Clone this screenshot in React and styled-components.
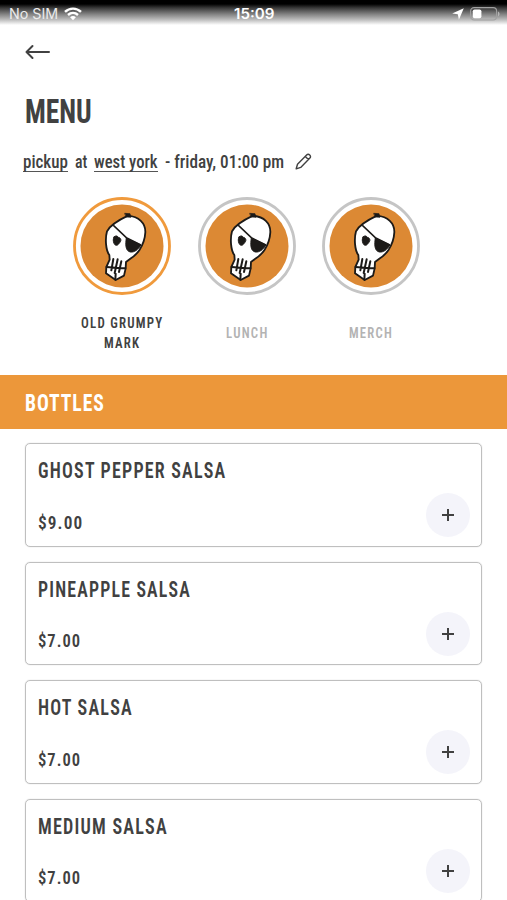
import React, { useLayoutEffect, useRef, useState } from "react";
import styled, { createGlobalStyle } from "styled-components";

const Global = createGlobalStyle`
  *, *::before, *::after { box-sizing: border-box; }
  html, body { margin: 0; background: #fff; }
  body { height: 900px; overflow: hidden; }
`;

const Screen = styled.div`
  width: 507px;
  height: 900px;
  overflow: hidden;
  display: flex;
  flex-direction: column;
  background: #fff;
  color: #414141;
  font-family: Roboto, "Liberation Sans", sans-serif;
  font-stretch: 75%;
`;

/* Condensed text squeezed to a fixed run width. */
const FitBox = styled.span`
  display: inline-block;
  flex: none;
  width: ${(p) => p.$width}px;
  white-space: nowrap;
`;

const FitInner = styled.span`
  display: inline-block;
  transform-origin: 0 50%;
`;

function Fit({ width, children }) {
  const ref = useRef(null);
  const [scale, setScale] = useState(1);
  useLayoutEffect(() => {
    const node = ref.current;
    const spacing = parseFloat(getComputedStyle(node).letterSpacing) || 0;
    setScale(width / (node.offsetWidth - spacing));
  }, [width, children]);
  return (
    <FitBox $width={width}>
      <FitInner ref={ref} style={{ transform: `scaleX(${scale})` }}>
        {children}
      </FitInner>
    </FitBox>
  );
}

const StatusBar = styled.header`
  flex: none;
  height: 25px;
  padding: 3px 7px 0 9px;
  display: grid;
  grid-template-columns: 225px 1fr auto;
  align-items: start;
  color: #fff;
  background: linear-gradient(#000 0, #000 4px, #3a3a3a 8px, #808080 14px, #c0c0c0 20px, #fff 25px);
  font: 400 14px/22px Inter, "Liberation Sans", sans-serif;
  font-stretch: 100%;
`;

const StatusSide = styled.div`
  display: flex;
  align-items: center;
  height: 22px;
  gap: 6px;
  color: ${(p) => (p.$end ? "#fff" : "#ececec")};
  justify-content: ${(p) => (p.$end ? "flex-end" : "flex-start")};
`;

const Clock = styled.div`
  font-weight: 600;
`;

const BackButton = styled.button`
  flex: none;
  width: 26px;
  height: 16px;
  margin: 19px 0 0 25px;
  padding: 0;
  border: 0;
  background: none;
  color: #414141;
  svg { display: block; }
`;

const Title = styled.h1`
  flex: none;
  margin: 31px 0 0 25px;
  font-size: 34px;
  line-height: 40px;
  font-weight: 700;
`;

const PickupLine = styled.div`
  flex: none;
  display: flex;
  align-items: center;
  height: 24px;
  margin: 18px 0 0 23px;
  font-size: 18.5px;
  line-height: 24px;
  font-weight: 500;
  svg { margin-left: 11px; }
`;

const Word = styled.span`
  height: 22px;
  margin-right: ${(p) => p.$gap || 0}px;
  line-height: 24px;
  border-bottom: ${(p) => (p.$link ? "1px solid #555" : "0")};
`;

const Categories = styled.nav`
  flex: none;
  display: flex;
  gap: 26.7px;
  margin: 24px 0 0 73px;
  height: 178px;
`;

const Category = styled.div`
  width: 98px;
  display: flex;
  flex-direction: column;
  align-items: center;
  color: ${(p) => (p.$active ? "#414141" : "#b3b3b3")};
`;

const CategoryLabel = styled.div`
  height: 40px;
  margin: 19px 1px 0 0;
  display: flex;
  flex-direction: column;
  align-items: center;
  justify-content: center;
  font-size: 15.5px;
  line-height: 19.7px;
  font-weight: 600;
  letter-spacing: 1.5px;
`;

const SectionBand = styled.h2`
  flex: none;
  margin: 0;
  height: 53.5px;
  padding-left: 25px;
  background: #ec973a;
  color: #fff;
  font-size: 24px;
  line-height: 56px;
  font-weight: 700;
  letter-spacing: 1.2px;
`;

const List = styled.main`
  display: flex;
  flex-direction: column;
  gap: 15px;
  padding: 14.6px 25px 0 25.4px;
`;

const Card = styled.article`
  flex: none;
  height: 103.5px;
  padding: 12.4px 11px 0 11.2px;
  border: 1px solid #bfbfbf;
  border-radius: 5px;
  box-shadow: 0 0 1px #bbb;
`;

const ItemName = styled.h3`
  margin: 0;
  font-size: 22.5px;
  line-height: 28px;
  font-weight: 600;
  letter-spacing: 1.5px;
`;

const CardFooter = styled.div`
  display: flex;
  justify-content: space-between;
  align-items: center;
  height: 44px;
  margin-top: 9px;
`;

const Price = styled.div`
  padding-top: 15px;
  font-size: 19px;
  line-height: 24px;
  font-weight: 600;
  letter-spacing: 1.2px;
`;

const AddButton = styled.button`
  width: 44px;
  height: 44px;
  padding: 0;
  border: 0;
  border-radius: 50%;
  display: grid;
  place-items: center;
  background: #f4f4fa;
  color: #414141;
`;

function Wifi() {
  return (
    <svg width="18" height="14" viewBox="0 0 18 14" fill="none" stroke="#fff" strokeWidth="2.4">
      <path d="M1 4.9C5.6.5 12.4.5 17 4.9M4 8c2.9-2.7 7.1-2.7 10 0" />
      <path d="M6.1 10.2c1.7-1.5 4.1-1.5 5.8 0L9 13.2z" fill="#fff" stroke="none" />
    </svg>
  );
}

function Battery() {
  return (
    <svg width="30" height="14" viewBox="0 0 30 14">
      <rect x=".6" y=".6" width="26" height="12.4" rx="3.5" fill="none" stroke="#a0a0a0" strokeWidth="1.1" />
      <rect x="2.8" y="2.5" width="8.6" height="8.8" rx="1.8" fill="#fff" />
      <path d="M28 4.6c2 .8 2 4 0 4.8z" fill="#b5b5b5" />
    </svg>
  );
}

function Skull({ ring }) {
  return (
    <svg width="98" height="98" viewBox="23 21 294 294">
      <circle cx="170" cy="168" r="142.5" fill="#fff" stroke={ring} strokeWidth="8.5" />
      <circle cx="170" cy="168" r="124.5" fill="#dc8934" />
      <g stroke="#1c1a18" strokeLinejoin="round" strokeLinecap="round">
        <path
          d="M188 77C220 80 241 99 240 127C239 149 233 164 222 181C211 198 198 203 182 216L181 235L176 257L151 270L122 250L123 231L133 209L132 195C121 181 119 146 125 124C134 106 154 93 188 77Z"
          fill="#fff"
          strokeWidth="5.5"
        />
        <path d="M179 70L194 71L197 82L183 81Z" fill="#1c1a18" strokeWidth="2" />
        <path d="M145 107L183 143L225 164" fill="none" strokeWidth="4.5" />
        <path d="M183 144L227 165C217 180 208 187 195 186C180 183 180 163 183 144Z" fill="#1c1a18" strokeWidth="3" />
        <path d="M146 141C151 136 156 137 159 142C168 144 169 153 162 159C157 168 149 168 146 160C143 153 143 147 146 141Z" fill="#1c1a18" strokeWidth="3" />
        <path d="M124 231L151 233L180 235M144 207L138 241M157 208L148 249M168 214L161 246M151 251L150 269" fill="none" strokeWidth="6" />
      </g>
    </svg>
  );
}

const categories = [
  { lines: [["OLD GRUMPY", 81], ["MARK", 35]], active: true },
  { lines: [["LUNCH", 41]] },
  { lines: [["MERCH", 43]] },
];

const items = [
  { name: "GHOST PEPPER SALSA", width: 187.5, price: "$9.00", priceWidth: 44.5 },
  { name: "PINEAPPLE SALSA", width: 151.5, price: "$7.00", priceWidth: 42.5 },
  { name: "HOT SALSA", width: 93.5, price: "$7.00", priceWidth: 42.5 },
  { name: "MEDIUM SALSA", width: 128.5, price: "$7.00", priceWidth: 42.5 },
];

export default function App() {
  return (
    <>
      <Global />
      <Screen>
        <StatusBar>
          <StatusSide>
            <Fit width={49}>No SIM</Fit>
            <Wifi />
          </StatusSide>
          <Clock>
            <Fit width={40}>15:09</Fit>
          </Clock>
          <StatusSide $end>
            <svg width="12" height="12" viewBox="0 0 12 12">
              <path d="M11.8.2L6.9 11.7L5.8 6.2L.2 5.5Z" fill="#fff" />
            </svg>
            <Battery />
          </StatusSide>
        </StatusBar>

        <BackButton aria-label="Back">
          <svg width="26" height="16" viewBox="0 0 26 16" fill="none" stroke="currentColor" strokeWidth="2" strokeLinecap="round" strokeLinejoin="round">
            <path d="M24 8H1.5M7.5 2L1.5 8l6 6" />
          </svg>
        </BackButton>

        <Title>
          <Fit width={67}>MENU</Fit>
        </Title>

        <PickupLine>
          <Word $link $gap={7}><Fit width={45}>pickup</Fit></Word>
          <Word $gap={7}><Fit width={12}>at</Fit></Word>
          <Word $link $gap={7}><Fit width={64}>west york</Fit></Word>
          <Word><Fit width={119}>- friday, 01:00 pm</Fit></Word>
          <svg width="17" height="17" viewBox="0 0 17 17" fill="none" stroke="#414141" strokeWidth="1.4" strokeLinejoin="round">
            <path d="M1.2 15.8L2.5 11.2L11.6 1.9C12.5 1 13.8 1 14.7 1.9C15.7 2.9 15.8 4.2 14.9 5.1L5.7 14.4ZM10.2 3.4L13.5 6.6" />
          </svg>
        </PickupLine>

        <Categories>
          {categories.map((c) => (
            <Category key={c.lines[0][0]} $active={c.active}>
              <Skull ring={c.active ? "#f09a3c" : "#c5c5c5"} />
              <CategoryLabel>
                {c.lines.map(([text, width]) => (
                  <Fit key={text} width={width}>{text}</Fit>
                ))}
              </CategoryLabel>
            </Category>
          ))}
        </Categories>

        <SectionBand>
          <Fit width={79}>BOTTLES</Fit>
        </SectionBand>

        <List>
          {items.map((item) => (
            <Card key={item.name}>
              <ItemName>
                <Fit width={item.width}>{item.name}</Fit>
              </ItemName>
              <CardFooter>
                <Price>
                  <Fit width={item.priceWidth}>{item.price}</Fit>
                </Price>
                <AddButton aria-label={`Add ${item.name}`}>
                  <svg width="12" height="12" viewBox="0 0 12 12" stroke="currentColor" strokeWidth="2">
                    <path d="M6 0v12M0 6h12" />
                  </svg>
                </AddButton>
              </CardFooter>
            </Card>
          ))}
        </List>
      </Screen>
    </>
  );
}
